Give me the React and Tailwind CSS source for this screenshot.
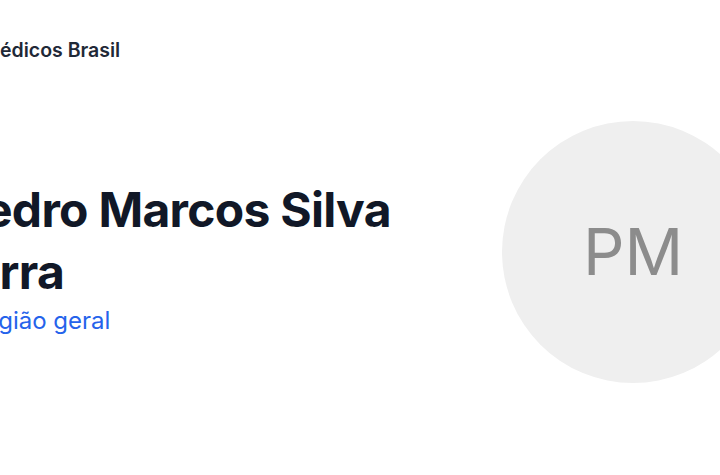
export default function App() {
  return (
    <div
      className="w-[720px] h-[475px] overflow-hidden bg-white"
      style={{ fontFamily: 'Inter, "Noto Sans", sans-serif' }}
    >
      <header className="pt-9 -ml-[18px]">
        <span className="text-[19.5px] leading-7 font-semibold text-[#1f2937]">Médicos Brasil</span>
      </header>

      <section className="mt-[57px] w-[764px] flex items-start justify-between">
        <div className="mt-[58px] -ml-[57px] w-[500px]">
          <h1 className="-ml-[2px] indent-[13px] text-5xl leading-[62px] font-bold tracking-[-0.015em] text-[#111827]">
            Pedro Marcos Silva Serra
          </h1>
          <p className="mt-[2px] text-2xl leading-8 text-[#2563eb]">Cirurgião geral</p>
        </div>
        <div className="w-[262px] h-[262px] rounded-full bg-[#efefef] flex items-center justify-center shrink-0">
          <span className="text-[65px] text-[#8c8c8c]">PM</span>
        </div>
      </section>
    </div>
  );
}
